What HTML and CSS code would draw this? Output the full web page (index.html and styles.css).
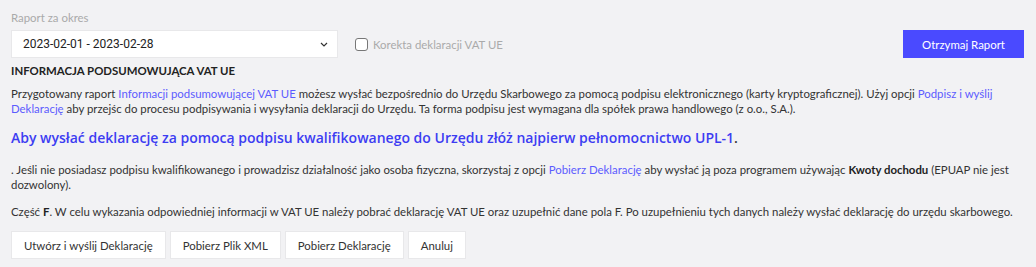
FILE: index.html
```html
<!DOCTYPE html>
<html lang="pl">
<head>
  <meta charset="UTF-8" />
  <title>Informacja podsumowująca VAT UE</title>
  <link rel="stylesheet" href="styles.css">
</head>
<body>
  <div class="page">
    <div class="top">
      <div class="period">
        <label class="field-label" for="period">Raport za okres</label>
        <div class="select-box">
          <span>2023-02-01 - 2023-02-28</span>
          <svg class="caret" width="8" height="5" viewBox="0 0 8 5"><path d="M1 1 L4 4 L7 1" fill="none" stroke="#333" stroke-width="1.2"/></svg>
        </div>
      </div>
      <label class="check">
        <span class="box"></span>
        <span>Korekta deklaracji VAT UE</span>
      </label>
      <button class="primary">Otrzymaj Raport</button>
    </div>

    <h4>INFORMACJA PODSUMOWUJĄCA VAT UE</h4>

    <p>Przygotowany raport <a href="#">Informacji podsumowującej VAT UE</a> możesz wysłać bezpośrednio do Urzędu Skarbowego za pomocą podpisu elektronicznego (karty kryptograficznej). Użyj opcji <a href="#">Podpisz i wyślij Deklarację</a> aby przejśc do procesu podpisywania i wysyłania deklaracji do Urzędu. Ta forma podpisu jest wymagana dla spółek prawa handlowego (z o.o., S.A.).</p>

    <h3><span>Aby wysłać deklarację za pomocą podpisu kwalifikowanego do Urzędu złóż najpierw pełnomocnictwo UPL-1</span>.</h3>

    <p>. Jeśli nie posiadasz podpisu kwalifikowanego i prowadzisz działalność jako osoba fizyczna, skorzystaj z opcji <a href="#">Pobierz Deklarację</a> aby wysłać ją poza programem używając <b>Kwoty dochodu</b> (EPUAP nie jest dozwolony).</p>

    <p class="part">Część <b>F</b>. W celu wykazania odpowiedniej informacji w VAT UE należy pobrać deklarację VAT UE oraz uzupełnić dane pola F. Po uzupełnieniu tych danych należy wysłać deklarację do urzędu skarbowego.</p>

    <div class="actions">
      <button class="btn">Utwórz i wyślij Deklarację</button>
      <button class="btn">Pobierz Plik XML</button>
      <button class="btn">Pobierz Deklarację</button>
      <button class="btn">Anuluj</button>
    </div>
  </div>
</body>
</html>
```

FILE: styles.css
```css
*, *::before, *::after { box-sizing: border-box; }
body {
  margin: 0;
  background: #f2f2f4;
  font-family: 'Lato', sans-serif;
  font-size: 11.4px;
  color: #333;
}
.page { padding: 10px 12px 0 11px; }

/* górny pasek */
.top { display: flex; align-items: flex-end; }
.period { width: 327px; }
.field-label { display: block; color: #aaa; font-size: 11.4px; line-height: 15px; margin-bottom: 5px; }
.select-box {
  height: 28px; background: #fff; border: 1px solid #e8e8ea;
  display: flex; align-items: center; justify-content: space-between;
  padding: 0 9px 0 11px;
  font-family: 'Roboto', sans-serif; font-size: 12px; color: #222;
}
.check {
  display: flex; align-items: center; gap: 5px;
  margin-left: 17px; height: 28px; color: #aaa; font-size: 11.4px;
}
.box { width: 13px; height: 13px; border: 1px solid #777; border-radius: 3px; background: #fff; }
button.primary {
  margin-left: auto; width: 121px; height: 28px;
  background: #4a4aff; color: #fff; border: none;
  font-family: 'Lato', sans-serif; font-size: 11.4px;
}

h4 { margin: 5px 0 0; font-size: 11.4px; font-weight: 700; color: #222; line-height: 15px; }
p { margin: 0; line-height: 15px; }
h4 + p { margin-top: 8px; }
a { color: #5c5cff; text-decoration: none; }
b { color: #222; }

h3 {
  margin: 12px 0 14px; font-family: 'Open Sans', sans-serif;
  font-size: 14px; font-weight: 600; line-height: 20px; color: #333;
}
h3 span { color: #3d3df2; }
.part { margin-top: 12px; }

.actions { display: flex; gap: 4px; margin-top: 12px; }
.btn {
  height: 28px; padding: 0 12px; background: #fff;
  border: 1px solid #e8e8ea; font-family: 'Lato', sans-serif;
  font-size: 11.4px; color: #333;
}
```
